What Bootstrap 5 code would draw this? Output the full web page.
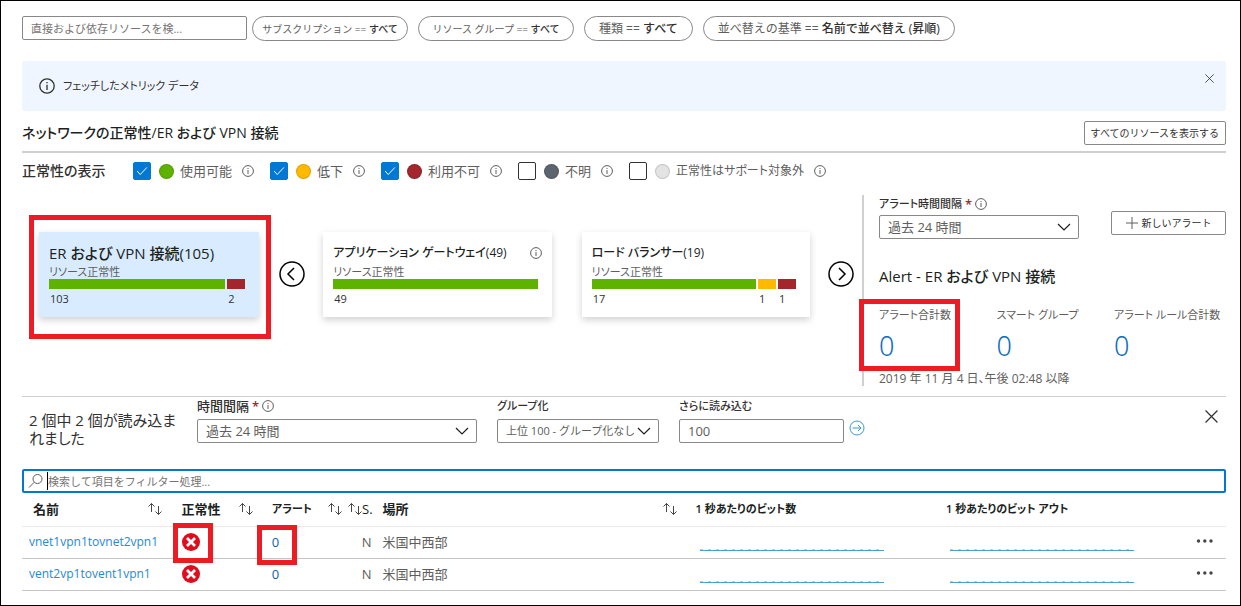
<!DOCTYPE html>
<html lang="ja">
<head>
<meta charset="utf-8">
<meta name="viewport" content="width=device-width, initial-scale=1">
<title>ネットワークの正常性</title>
<link href="https://cdn.jsdelivr.net/npm/bootstrap@5.3.0/dist/css/bootstrap.min.css" rel="stylesheet">
<style>
  :root { --ink:#323130; --soft:#605e5c; --line:#8a8886; --azure:#0078d4; --ok:#5db300; --warn:#ffb900; --bad:#a4262c; --callout:#ed1c24; }
  body { font-family:"Open Sans","Noto Sans CJK JP",sans-serif; font-size:13px; line-height:18px; color:var(--ink); font-feature-settings:"palt"; }
  .page { min-height:100vh; border:1px solid #000; padding:15px 14px 8px 21px; }
  svg { display:block; flex:none; }
  .ico { width:12px; height:12px; color:var(--soft); }
  .form-control, .form-select { height:24px; min-height:0; padding:0 8px; font-size:13px; line-height:20px; border-color:var(--line); border-radius:2px; color:var(--soft); box-shadow:none; }
  .form-control::placeholder { color:#767472; opacity:1; font-size:11px; }
  .form-select { padding-right:24px; background-size:14px 8px; background-position:right 7px center;
    background-image:url("data:image/svg+xml,%3Csvg xmlns='http://www.w3.org/2000/svg' viewBox='0 0 14 8'%3E%3Cpath d='M1 1l6 6 6-6' fill='none' stroke='%23201f1e' stroke-width='1.2'/%3E%3C/svg%3E"); }
  .kana, .form-select.kana { font-size:11px; }
  .find { width:225px; flex:0 1 225px; }
  .pills { margin-left:5px; gap:10px; }
  .pill { height:25px; border:1px solid var(--line); border-radius:13px; background:#fff; padding:0 8px; font-size:10px; line-height:18px; color:var(--ink); white-space:nowrap; min-width:156px; }
  .pill.kanji { font-size:12px; min-width:0; padding:0 14px; }
  .pill span { color:var(--soft); }
  .pill b { font-weight:500; }
  .notice { margin-top:20px; height:50px; background:#eff6ff; border-radius:2px; padding:0 12px 0 17px; }
  .bare { border:0; background:none; padding:0; color:inherit; }
  .title-row { height:42px; border-bottom:2px solid #d2d0ce; padding-top:3px; }
  .h-title { font-size:14px; line-height:20px; font-weight:500; margin:0; color:#201f1e; }
  .line-btn { height:24px; border:1px solid var(--line); border-radius:2px; background:#fff; padding:0 6px; color:var(--ink); font-size:10px; line-height:18px; white-space:nowrap; min-width:115px; }
  .legend-row { margin-top:9px; gap:16px; }
  .legend-row strong { width:95px; font-weight:500; font-size:14px; }
  .legend-row label { margin:0 2px 0 -2px; color:var(--soft); }
  .legend-row .long { font-size:12px; }
  .form-check-input { width:18px; height:18px; margin:0; border:1px solid var(--ink); border-radius:2px !important; }
  .form-check-input:checked { background-color:var(--azure); border-color:var(--azure);
    background-image:url("data:image/svg+xml,%3Csvg xmlns='http://www.w3.org/2000/svg' viewBox='0 0 18 18'%3E%3Cpath d='M3.500 9l3.500 4 7.500-8' fill='none' stroke='%23fff' stroke-width='1.100'/%3E%3C/svg%3E"); }
  .dot { width:15px; height:15px; border-radius:50%; border:1px solid #0002; flex:none; }
  .ok { background:var(--ok); } .warn { background:var(--warn); } .bad { background:var(--bad); } .unk { background:#5c6470; } .non { background:#e3e3e3; }
  .overview { margin-top:15px; }
  .tiles { padding:20px 8px 0 7px; }
  .marked { border:5px solid var(--callout); padding:12px 7px 17px 5px; flex:1 1 243px; min-width:0; }
  .tile { height:85px; padding:11px 14px 0 10px; background:#fff; box-shadow:0 3px 7px #0000002e; min-width:0; }
  .tile.on { background:#d9ecff; }
  .tile.free { flex:1 1 229px; margin-top:17px; }
  .tile.first { margin-left:10px; margin-right:30px; }
  .tile.last { margin-right:18px; }
  .tile h3 { font-size:12px; line-height:20px; font-weight:500; margin:0; color:#201f1e; white-space:nowrap; }
  .tile.on h3 { font-size:15px; }
  .tile .ico { margin-right:-4px; }
  .tile .sub { font-size:11px; line-height:15px; color:var(--soft); height:16px; padding-top:1px; }
  .segs { gap:2px; font-size:11px; line-height:15px; }
  .segs i { display:block; height:10px; margin-bottom:2px; }
  .segs div { min-width:18px; }
  .segs span { padding-left:1px; }
  .round { width:26px; height:26px; margin-top:46px; color:#000; flex:none; }
  .alerts { flex:0 0 364px; border-left:2px solid #d2d0ce; padding:1px 0 0 15px; height:191px; }
  .lbl { line-height:16px; margin:0 0 3px; display:flex; align-items:center; gap:3px; white-space:nowrap; font-weight:500; }
  .lbl em { color:var(--bad); font-style:normal; font-weight:600; font-size:13px; }
  .period { width:200px; }
  .alerts h2 { font-size:15px; line-height:20px; font-weight:500; margin:27px 0 0; color:#201f1e; }
  .stats { margin-top:20px; }
  .stat { flex:1 1 118px; white-space:nowrap; font-size:11px; color:var(--soft); position:relative; }
  .stat:last-child { flex:0 0 112px; }
  .stat a { display:block; font-size:27px; line-height:36px; margin-top:4px; color:#0f6cbd; text-decoration:none; font-family:"Noto Sans","Open Sans",sans-serif; font-weight:300; }
  .stat .box { position:absolute; inset:-7px 37px -7px -20px; border:5px solid var(--callout); }
  .since { font-size:12px; line-height:16px; margin-top:7px; color:var(--soft); }
  .filters { margin-top:10px; border-top:1px solid #d2d0ce; padding-top:1px; height:73px; }
  .filters .lbl { margin-bottom:5px; }
  .filters .field { margin-left:20px; flex:0 1 162px; }
  .filters .amount { flex-basis:165px; }
  .filters .wide { margin-left:7px; flex:0 1 280px; }
  .filters .go { margin:22px 0 0 5px; }
  .loaded { font-size:15px; width:168px; padding:13px 10px 0 7px; line-height:18px; }
  .search { height:24px; border:2px solid var(--azure); border-radius:2px; padding:0 4px; gap:3px; }
  .search .form-control { height:18px; border:0; border-left:1px solid #000; border-radius:0; padding:0; }
  .grid { table-layout:fixed; width:100%; margin:0; }
  .grid th, .grid td { padding:0 9px; height:32px; vertical-align:middle; border-bottom:1px solid #c8c6c4; white-space:nowrap; position:relative; }
  .grid th { height:33px; font-weight:600; color:#201f1e; border-color:#edebe9; }
  .grid td { color:var(--soft); }
  .grid .tight { padding:0 2px 0 0; }
  .grid th .s-label { font-weight:500; margin-left:-1px; }
  .grid .c-name { padding-left:7px; padding-right:0; font-size:12px; }
  .grid th.c-name { padding-left:11px; padding-right:10px; font-size:13px; }
  .grid a { text-decoration:none; color:#2589d8; }
  .grid a.num { color:#0f5fb0; }
  .grid .spark { padding:17px 0 0 13px; }
  .grid .menu { padding-bottom:3px; }
  .mark-cell { position:absolute; width:40px; height:40px; border:5px solid var(--callout); top:-4px; left:0; pointer-events:none; }
  .mark-num { left:-6px; top:-2px; }
</style>
</head>
<body>
<svg width="0" height="0" class="position-absolute" aria-hidden="true">
  <symbol id="info" viewBox="0 0 12 12"><circle cx="6" cy="6" r="5.400" fill="none" stroke="currentColor"/><path d="M6 5v4M6 3v1" stroke="currentColor" stroke-width="1"/></symbol>
  <symbol id="sort" viewBox="0 0 16 14"><path d="M4.500 10V1.500M1.500 4.500l3-3 3 3M11.500 4v8.500M8.500 9.500l3 3 3-3" fill="none" stroke="#484644"/></symbol>
  <symbol id="cross" viewBox="0 0 12 12"><path d="M.5.5l11 11M11.500.5l-11 11" fill="none" stroke="currentColor" stroke-width="1.100"/></symbol>
  <symbol id="error" viewBox="0 0 18 18"><circle cx="9" cy="9" r="9" fill="#e00b1c"/><path d="M5 5l8 8M13 5l-8 8" stroke="#fff" stroke-width="2.800"/></symbol>
  <symbol id="dots" viewBox="0 0 16 4"><g fill="#484644"><circle cx="2" cy="2" r="1.700"/><circle cx="8.300" cy="2" r="1.700"/><circle cx="14.500" cy="2" r="1.700"/></g></symbol>
  <pattern id="tick" width="8" height="3" patternUnits="userSpaceOnUse"><path d="M0 .5h3" stroke="#a5d3ea"/><path d="M0 1.500h8" stroke="#4a9fd0"/></pattern>
  <symbol id="flat" viewBox="0 0 184 3"><rect width="184" height="3" fill="url(#tick)"/></symbol>
</svg>
<main class="page">
  <div class="d-flex align-items-start">
    <input class="form-control find" type="text" placeholder="直接および依存リソースを検..." aria-label="リソースを検索">
    <div class="pills d-flex">
      <button class="pill" type="button"><span>サブスクリプション ==</span> <b>すべて</b></button>
      <button class="pill" type="button"><span>リソース グループ ==</span> <b>すべて</b></button>
      <button class="pill kanji" type="button"><span>種類 ==</span> <b>すべて</b></button>
      <button class="pill kanji" type="button"><span>並べ替えの基準 ==</span> <b>名前で並べ替え (昇順)</b></button>
    </div>
  </div>

  <div class="notice d-flex align-items-center">
    <svg width="16" height="16"><use href="#info"/></svg>
    <span class="ms-2 kana">フェッチしたメトリック データ</span>
    <button class="bare ms-auto mb-3" type="button" aria-label="閉じる"><svg width="9" height="9"><use href="#cross"/></svg></button>
  </div>

  <div class="title-row d-flex align-items-center justify-content-between">
    <h1 class="h-title">ネットワークの正常性/ER および VPN 接続</h1>
    <button class="line-btn" type="button">すべてのリソースを表示する</button>
  </div>

  <div class="legend-row d-flex align-items-center">
    <strong>正常性の表示</strong>
    <div class="d-flex align-items-center gap-2"><input class="form-check-input" type="checkbox" id="k1" checked><i class="dot ok"></i><label for="k1">使用可能</label><svg class="ico"><use href="#info"/></svg></div>
    <div class="d-flex align-items-center gap-2"><input class="form-check-input" type="checkbox" id="k2" checked><i class="dot warn"></i><label for="k2">低下</label><svg class="ico"><use href="#info"/></svg></div>
    <div class="d-flex align-items-center gap-2"><input class="form-check-input" type="checkbox" id="k3" checked><i class="dot bad"></i><label for="k3">利用不可</label><svg class="ico"><use href="#info"/></svg></div>
    <div class="d-flex align-items-center gap-2"><input class="form-check-input" type="checkbox" id="k4"><i class="dot unk"></i><label for="k4">不明</label><svg class="ico"><use href="#info"/></svg></div>
    <div class="d-flex align-items-center gap-2"><input class="form-check-input" type="checkbox" id="k5"><i class="dot non"></i><label class="long" for="k5">正常性はサポート対象外</label><svg class="ico"><use href="#info"/></svg></div>
  </div>

  <section class="overview d-flex">
    <div class="tiles d-flex align-items-start flex-grow-1">
      <div class="marked">
        <div class="tile on">
          <h3>ER および VPN 接続(105)</h3>
          <div class="sub">リソース正常性</div>
          <div class="segs d-flex"><div class="flex-grow-1"><i class="ok"></i><span>103</span></div><div><i class="bad"></i><span>2</span></div></div>
        </div>
      </div>
      <button class="bare round mx-2" type="button" aria-label="前へ"><svg width="26" height="26" viewBox="0 0 26 26" fill="none" stroke="currentColor" stroke-width="1.500"><circle cx="13" cy="13" r="12"/><path d="M15 7l-6 6 6 6"/></svg></button>
      <div class="tile free first">
        <div class="d-flex align-items-center justify-content-between"><h3>アプリケーション ゲートウェイ(49)</h3><svg class="ico"><use href="#info"/></svg></div>
        <div class="sub">リソース正常性</div>
        <div class="segs d-flex"><div class="flex-grow-1"><i class="ok"></i><span>49</span></div></div>
      </div>
      <div class="tile free last">
        <h3>ロード バランサー(19)</h3>
        <div class="sub">リソース正常性</div>
        <div class="segs d-flex"><div class="flex-grow-1"><i class="ok"></i><span>17</span></div><div><i class="warn"></i><span>1</span></div><div><i class="bad"></i><span>1</span></div></div>
      </div>
      <button class="bare round" type="button" aria-label="次へ"><svg width="26" height="26" viewBox="0 0 26 26" fill="none" stroke="currentColor" stroke-width="1.500"><circle cx="13" cy="13" r="12"/><path d="M11 7l6 6-6 6"/></svg></button>
    </div>

    <aside class="alerts">
      <div class="d-flex justify-content-between align-items-end">
        <div class="period">
          <label class="lbl kana" for="span1">アラート時間間隔 <em>*</em><svg class="ico"><use href="#info"/></svg></label>
          <select class="form-select" id="span1"><option>過去 24 時間</option></select>
        </div>
        <button class="line-btn d-flex align-items-center justify-content-center gap-1 mb-1" type="button"><svg width="12" height="12" viewBox="0 0 12 12"><path d="M6 0v12M0 6h12" stroke="#605e5c"/></svg>新しいアラート</button>
      </div>
      <h2>Alert - ER および VPN 接続</h2>
      <div class="stats d-flex">
        <div class="stat">アラート合計数<a href="#">0</a><span class="box"></span></div>
        <div class="stat">スマート グループ<a href="#">0</a></div>
        <div class="stat">アラート ルール合計数<a href="#">0</a></div>
      </div>
      <div class="since">2019 年 11 月 4 日、午後 02:48 以降</div>
    </aside>
  </section>

  <section class="filters d-flex">
    <div class="loaded">2 個中 2 個が読み込まれました</div>
    <div class="wide">
      <label class="lbl" for="span2">時間間隔 <em>*</em><svg class="ico"><use href="#info"/></svg></label>
      <select class="form-select" id="span2"><option>過去 24 時間</option></select>
    </div>
    <div class="field">
      <label class="lbl kana" for="grp">グループ化</label>
      <select class="form-select kana" id="grp"><option>上位 100 - グループ化なし</option></select>
    </div>
    <div class="field amount">
      <label class="lbl kana" for="more">さらに読み込む</label>
      <input class="form-control" id="more" type="text" value="100">
    </div>
    <button class="bare go align-self-start" type="button" aria-label="読み込む"><svg width="16" height="16" viewBox="0 0 16 16" fill="none" stroke="#3a9bcb"><circle cx="8" cy="8" r="7"/><path d="M3.500 8h8.500M9 5l3 3-3 3"/></svg></button>
    <button class="bare ms-auto me-2 mt-2 align-self-start" type="button" aria-label="閉じる"><svg class="mt-1" width="13" height="13"><use href="#cross"/></svg></button>
  </section>

  <div class="search d-flex align-items-center">
    <svg width="16" height="16" viewBox="0 0 16 16" fill="none" stroke="#605e5c"><circle cx="9.500" cy="6" r="4.500"/><path d="M6.300 9.200L1 14.500"/></svg>
    <input class="form-control" type="text" placeholder="検索して項目をフィルター処理..." aria-label="項目をフィルター">
  </div>

  <table class="grid">
    <colgroup><col style="width:12.5%"><col style="width:7.5%"><col style="width:7%"><col style="width:2.2%"><col style="width:26%"><col style="width:20.8%"><col style="width:20.8%"><col style="width:3.2%"></colgroup>
    <thead>
      <tr>
        <th class="c-name"><div class="d-flex justify-content-between align-items-center">名前<svg width="16" height="14"><use href="#sort"/></svg></div></th>
        <th><div class="d-flex justify-content-between align-items-center">正常性<svg width="16" height="14"><use href="#sort"/></svg></div></th>
        <th class="kana pe-1"><div class="d-flex justify-content-between align-items-center">アラート<svg width="16" height="14"><use href="#sort"/></svg></div></th>
        <th class="tight"><div class="d-flex align-items-center"><svg width="16" height="14"><use href="#sort"/></svg><span class="s-label">S.</span></div></th>
        <th><div class="d-flex justify-content-between align-items-center">場所<svg width="16" height="14"><use href="#sort"/></svg></div></th>
        <th class="kana">1 秒あたりのビット数</th>
        <th class="kana">1 秒あたりのビット アウト</th>
        <th></th>
      </tr>
    </thead>
    <tbody>
      <tr>
        <td class="c-name"><a href="#">vnet1vpn1tovnet2vpn1</a></td>
        <td><svg width="18" height="18"><use href="#error"/></svg><span class="mark-cell"></span></td>
        <td><a class="num" href="#">0</a><span class="mark-cell mark-num"></span></td>
        <td class="tight text-end">N</td>
        <td>米国中西部</td>
        <td class="spark"><svg width="184" height="3"><use href="#flat"/></svg></td>
        <td class="spark"><svg width="184" height="3"><use href="#flat"/></svg></td>
        <td class="menu"><button class="bare d-block" type="button" aria-label="その他"><svg width="17" height="4"><use href="#dots"/></svg></button></td>
      </tr>
      <tr>
        <td class="c-name"><a href="#">vent2vp1tovent1vpn1</a></td>
        <td><svg width="18" height="18"><use href="#error"/></svg></td>
        <td><a class="num" href="#">0</a></td>
        <td class="tight text-end">N</td>
        <td>米国中西部</td>
        <td class="spark"><svg width="184" height="3"><use href="#flat"/></svg></td>
        <td class="spark"><svg width="184" height="3"><use href="#flat"/></svg></td>
        <td class="menu"><button class="bare d-block" type="button" aria-label="その他"><svg width="17" height="4"><use href="#dots"/></svg></button></td>
      </tr>
    </tbody>
  </table>
</main>
<script src="https://cdn.jsdelivr.net/npm/bootstrap@5.3.0/dist/js/bootstrap.bundle.min.js"></script>
</body>
</html>
